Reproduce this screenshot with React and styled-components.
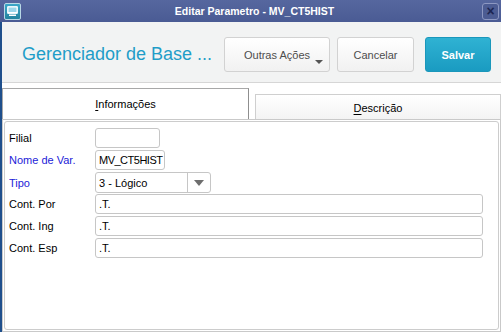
import React from 'react'
import styled, { createGlobalStyle } from 'styled-components';

const GlobalStyle = createGlobalStyle`
    html, body {
        margin: 0;
        padding: 0;
        background: #ffffff;
    }
    body {
        font-family: "Liberation Sans", Arial, sans-serif;
        font-size: 11px;
        color: #000;
    }
`;

const fields = [
    { label: 'Filial', value: '', width: '65px' },
    { label: 'Nome de Var.', value: 'MV_CT5HIST', width: '70px', blue: true, tight: true },
    { label: 'Tipo', value: '3 - Lógico', width: '116px', blue: true, select: true },
    { label: 'Cont. Por', value: '.T.' },
    { label: 'Cont. Ing', value: '.T.' },
    { label: 'Cont. Esp', value: '.T.' },
];

const AppIcon = () => (
    <IconBox>
        <svg width="11" height="10" viewBox="0 0 11 10">
            <rect x="0.5" y="0.5" width="10" height="7" rx="0.5" fill="#ffffff" stroke="#e8f6fb" />
            <rect x="1.5" y="1.5" width="8" height="4.5" fill="#9ad6ea" />
            <rect x="2" y="8.5" width="7" height="1.5" fill="#ffffff" />
        </svg>
    </IconBox>
);

export default function App() {
    return (
        <>
            <GlobalStyle />
            <Window>
                <TitleBar>
                    <AppIcon />
                    <TitleText>Editar Parametro - MV_CT5HIST</TitleText>
                    <CloseButton>×</CloseButton>
                </TitleBar>

                <Body>
                    <Header>
                        <Heading>Gerenciador de Base ...</Heading>
                        <Actions>
                            <Button width="106px">
                                Outras Ações
                                <Caret />
                            </Button>
                            <Button width="77px">Cancelar</Button>
                            <Button width="66px" primary>Salvar</Button>
                        </Actions>
                    </Header>

                    <Tabs>
                        <Tab active>
                            <u>I</u>nformações
                        </Tab>
                        <Tab>
                            <u>D</u>escrição
                        </Tab>
                    </Tabs>

                    <Panel>
                        <Inner>
                            <Form>
                                {fields.map((f) => (
                                    <Row key={f.label}>
                                        <Label blue={f.blue}>{f.label}</Label>
                                        {f.select ? (
                                            <Select width={f.width}>
                                                <span>{f.value}</span>
                                                <SelectArrow />
                                            </Select>
                                        ) : (
                                            <Field width={f.width} tight={f.tight}>{f.value}</Field>
                                        )}
                                    </Row>
                                ))}
                            </Form>
                        </Inner>
                    </Panel>
                </Body>
            </Window>
        </>
    )
}

const Window = styled.div`
    width: 501px;
    height: 332px;
    display: flex;
    flex-direction: column;
    overflow: hidden;
`;

const TitleBar = styled.div`
    height: 22px;
    flex: none;
    display: flex;
    align-items: center;
    padding: 0 2px 0 4px;
    background: linear-gradient(#56679f, #4a5b94);
`;

const IconBox = styled.div`
    width: 15px;
    height: 15px;
    border: 1px solid #b8d8e6;
    border-radius: 2px;
    background: linear-gradient(#3aa6c8, #23849f);
    display: flex;
    align-items: center;
    justify-content: center;
`;

const TitleText = styled.div`
    flex: 1;
    text-align: center;
    color: #ffffff;
    font-weight: bold;
    font-size: 10.5px;
    padding-left: 6px;
`;

const CloseButton = styled.div`
    width: 15px;
    height: 15px;
    border: 1px solid #8d98c2;
    border-radius: 3px;
    background: #4c5c93;
    color: #1c2652;
    font-size: 14px;
    font-weight: bold;
    line-height: 14px;
    text-align: center;
`;

const Body = styled.div`
    flex: 1;
    display: flex;
    flex-direction: column;
    border-left: 2px solid #1f4f8c;
`;

const Header = styled.div`
    height: 60px;
    flex: none;
    display: flex;
    align-items: center;
    justify-content: space-between;
    padding: 0 10px 0 20px;
    background: #f2f3f3;
    border-bottom: 1px solid #d6d6d6;
`;

const Heading = styled.h1`
    margin: 0;
    font-family: "Liberation Sans", Arial, sans-serif;
    font-weight: normal;
    font-size: 18px;
    color: #1f9dc8;
    padding-top: 4px;
`;

const Actions = styled.div`
    display: flex;
    gap: 7px;
    padding-top: 5px;

    & > :last-child {
        margin-left: 4px;
    }
`;

const Button = styled.div`
    position: relative;
    width: ${(p) => p.width};
    height: 35px;
    box-sizing: border-box;
    display: flex;
    align-items: center;
    justify-content: center;
    font-size: 11px;
    border-radius: 3px;
    border: 1px solid ${(p) => (p.primary ? '#1a97bb' : '#d2d2d2')};
    background: ${(p) => (p.primary
        ? 'linear-gradient(#2fb2d3, #1a9bc1)'
        : 'linear-gradient(#ffffff, #f1f1f1)')};
    color: ${(p) => (p.primary ? '#ffffff' : '#4d4d4d')};
    font-weight: ${(p) => (p.primary ? 'bold' : 'normal')};
`;

const Caret = styled.span`
    position: absolute;
    right: 6px;
    bottom: 7px;
    width: 0;
    height: 0;
    border-left: 4px solid transparent;
    border-right: 4px solid transparent;
    border-top: 4px solid #555;
`;

const Tabs = styled.div`
    flex: none;
    display: flex;
    align-items: flex-end;
    gap: 6px;
    margin-top: 5px;
`;

const Tab = styled.div`
    width: ${(p) => (p.active ? '247px' : '246px')};
    height: ${(p) => (p.active ? '31px' : '25px')};
    box-sizing: border-box;
    display: flex;
    align-items: center;
    justify-content: center;
    font-size: 11px;
    background: ${(p) => (p.active ? '#ffffff' : 'linear-gradient(#ffffff, #f3f3f3)')};
    border: 1px solid ${(p) => (p.active ? '#a8a8a8' : '#cfcfcf')};
    border-right-color: ${(p) => (p.active ? '#8f8f8f' : '#cfcfcf')};
    border-bottom: none;
    padding-top: ${(p) => (p.active ? '0' : '2px')};

    u {
        text-decoration-thickness: 1px;
        text-underline-offset: 2px;
    }
`;

const Panel = styled.div`
    flex: 1;
    display: flex;
    padding: 1px;
    border: 1px solid #c9c9c9;
    width: 499px;
    box-sizing: border-box;
`;

const Inner = styled.div`
    flex: 1;
    border: 1px solid #cccccc;
    border-radius: 3px;
    padding: 6px 15px 0 4px;
`;

const Form = styled.div`
    display: flex;
    flex-direction: column;
    gap: 2px;
`;

const Row = styled.div`
    display: grid;
    grid-template-columns: 86px 1fr;
    align-items: center;
    height: 20px;
`;

const Label = styled.div`
    font-size: 11px;
    color: ${(p) => (p.blue ? '#2222d8' : '#000000')};
`;

const Field = styled.div`
    width: ${(p) => p.width || 'auto'};
    height: 20px;
    box-sizing: border-box;
    border: 1px solid #c6c6c6;
    border-radius: 3px;
    padding: 0 1px 0 3px;
    display: flex;
    align-items: center;
    font-size: 11px;
    letter-spacing: ${(p) => (p.tight ? '-0.5px' : 'normal')};
    white-space: nowrap;
    overflow: hidden;
`;

const Select = styled(Field)`
    height: 21px;
    padding-right: 0;
    justify-content: space-between;

    span {
        flex: 1;
    }
`;

const SelectArrow = styled.div`
    width: 22px;
    height: 100%;
    border-left: 1px solid #c6c6c6;
    display: flex;
    align-items: center;
    justify-content: center;

    &::after {
        content: '';
        border-left: 5px solid transparent;
        border-right: 5px solid transparent;
        border-top: 6px solid #6e6e6e;
    }
`;
